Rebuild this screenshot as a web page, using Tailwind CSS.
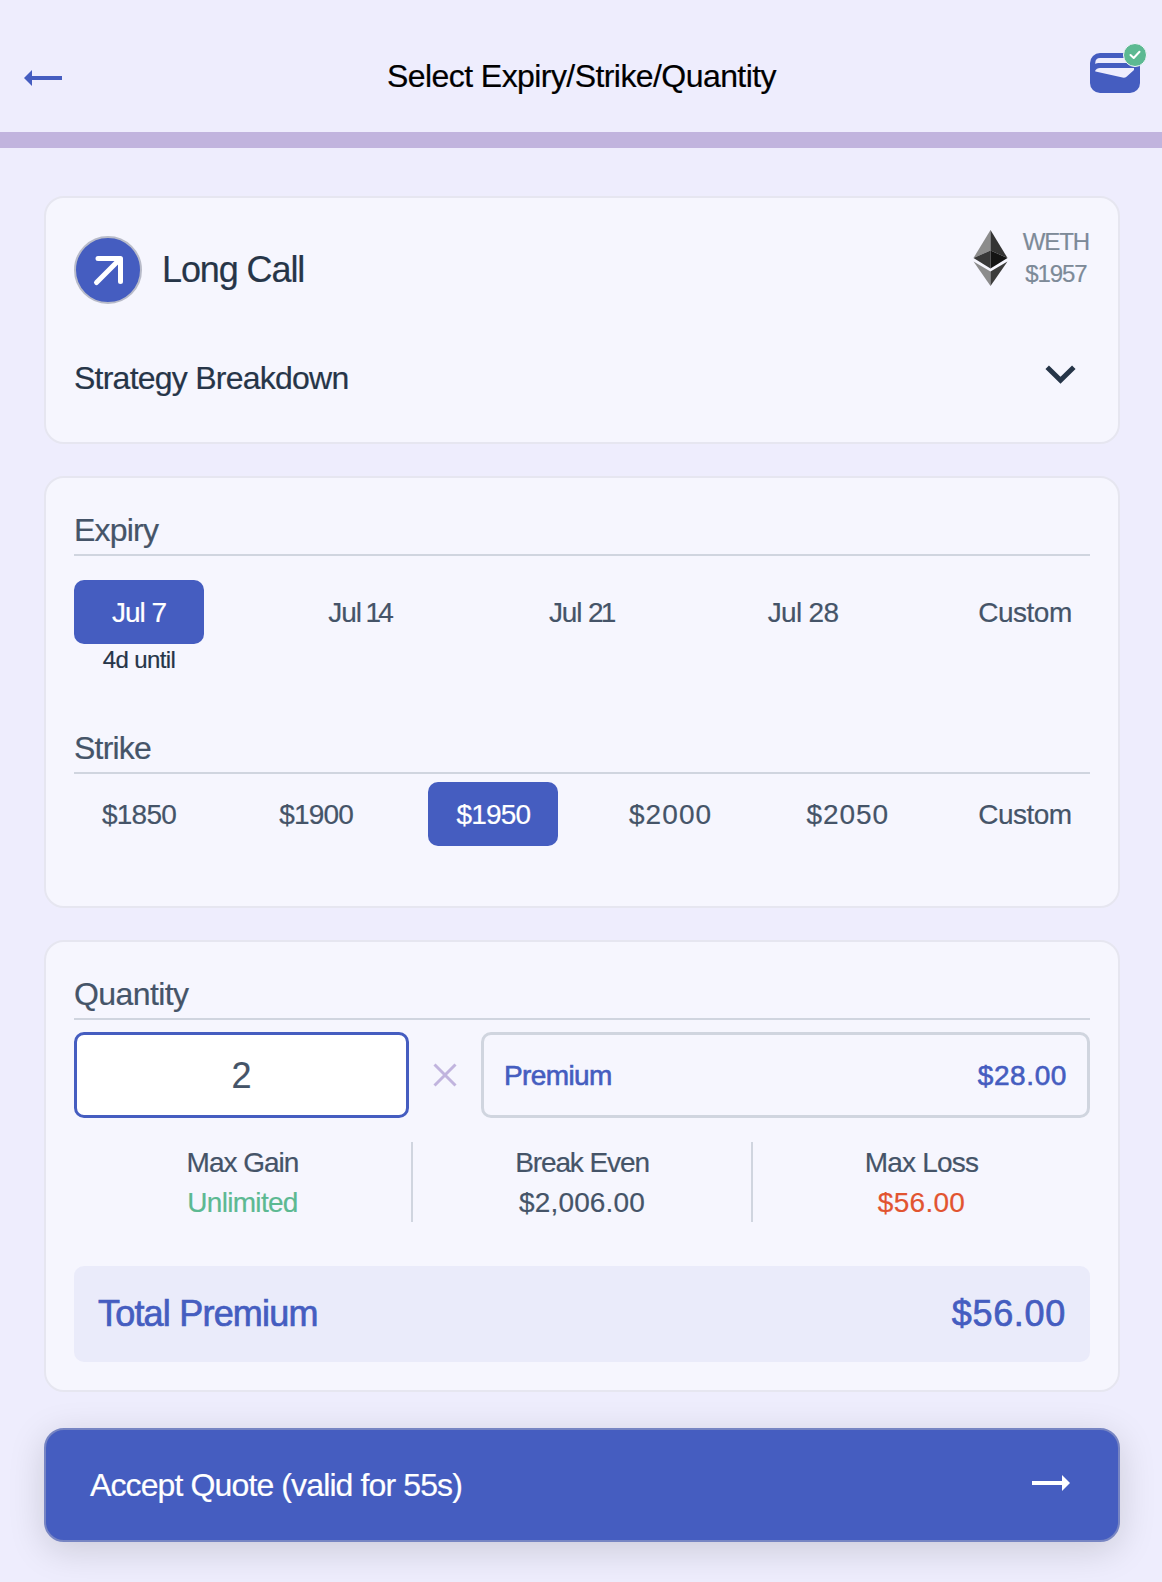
<!DOCTYPE html>
<html lang="en">
<head>
<meta charset="utf-8">
<title>Select Expiry/Strike/Quantity</title>
<script src="https://cdn.jsdelivr.net/npm/@tailwindcss/browser@4"></script>
</head>
<body class="h-[1582px] overflow-hidden bg-[#eeedfd] font-['Liberation_Sans',Arial,sans-serif] whitespace-nowrap [-webkit-text-stroke:0.2px]">
<header class="flex h-[148px] items-start justify-between border-b-16 border-[#c1b4de] pl-6 pr-[22px]">
  <svg class="mt-[70px] h-4 w-[38px] shrink-0" viewBox="0 0 38 16" fill="#455dc0"><path d="M0 8L8 0V6H38V10H8V16Z"/></svg>
  <h1 class="mt-14 ml-[11px] text-[32px] leading-[40px] tracking-[-0.57px] text-black">Select Expiry/Strike/Quantity</h1>
  <div class="relative mt-[53px] h-10 w-[50px]">
    <svg class="h-10 w-[50px]" viewBox="0 0 50 40"><rect width="50" height="40" rx="10" fill="#455dc0"/><path d="M5.300 11V9.500Q5.500 5 10 5H40V10H8.500Q6.500 10 5.300 11ZM5 18Q6.500 15 10 15H44V17L36.500 23.800Q35 25 32.500 24.600L5.500 18.500Z" fill="#eeedfd"/></svg>
    <svg class="absolute -top-[10px] left-[33px] size-6" viewBox="0 0 24 24"><circle cx="12" cy="12" r="11.500" fill="#5cb992" stroke="#f6f6fe" stroke-width="1"/><path d="M7.500 12L10.700 15L16.500 8.700" fill="none" stroke="#fff" stroke-width="2" stroke-linecap="round" stroke-linejoin="round"/></svg>
  </div>
</header>
<main class="flex flex-col pt-12 pr-[42px] pl-11">
  <section class="h-[248px] rounded-[20px] border-2 border-[#e6e6f0] bg-[#f6f6fe] px-7 text-[#263548]">
    <div class="flex justify-between">
      <div class="flex items-center pt-[38px]">
        <div class="flex size-[68px] items-center justify-center rounded-full border-2 border-[#b8bbc9] bg-[#455dc0]">
          <svg class="size-16 shrink-0" viewBox="0 0 64 64" fill="none" stroke="#fff" stroke-width="5" stroke-linecap="round" stroke-linejoin="round"><path d="M22 20.500H44.500V43.500M43.500 21.500L20.500 44.500"/></svg>
        </div>
        <h2 class="ml-5 text-[36px] leading-10 tracking-[-1.1px]">Long Call</h2>
      </div>
      <div class="flex pt-[28px] text-[24px] leading-8 text-[#7d8a98]">
        <svg class="mt-1 mr-[15px] h-14 w-[35px]" viewBox="0 0 35 56"><path d="M17.500 0L.5 28L17.500 20.500Z" fill="#8c8c8c"/><path d="M17.500 0L34.500 28L17.500 20.500Z" fill="#343434"/><path d="M.5 28L17.500 20.500V38.500Z" fill="#393939"/><path d="M34.500 28L17.500 20.500V38.500Z" fill="#141414"/><path d="M.5 31.500L17.500 41.500V56Z" fill="#8c8c8c"/><path d="M34.500 31.500L17.500 41.500V56Z" fill="#3c3c3b"/></svg>
        <div class="pr-px text-center"><div class="tracking-[-1.1px]">WETH</div><div class="tracking-[-1.1px]">$1957</div></div>
      </div>
    </div>
    <div class="mt-[54px] flex items-start justify-between pr-[14px]">
      <h3 class="text-[32px] leading-10 tracking-[-0.76px]">Strategy Breakdown</h3>
      <svg class="mt-[7px] h-[19px] w-[31px]" viewBox="0 0 31 19" fill="none" stroke="#263548" stroke-width="5"><path d="M2.200 2.200L15.500 15.200L28.800 2.200"/></svg>
    </div>
  </section>

  <section class="mt-8 h-[432px] rounded-[20px] border-2 border-[#e6e6f0] bg-[#f6f6fe] px-7 pt-[26px] text-[#455468]">
    <h3 class="h-[52px] border-b-2 border-[#d0d5df] text-[32px] leading-[52px] tracking-[-0.8px]">Expiry</h3>
    <div class="mt-6 flex h-24 justify-between text-center text-[28px] leading-[66px]">
      <div class="w-[130px]"><div class="h-16 rounded-[10px] bg-[#455dc0] tracking-[-1px] text-white">Jul 7</div><div class="text-[24px] leading-8 tracking-[-0.6px] text-[#263548]">4d until</div></div>
      <div class="w-[130px] tracking-[-1.1px]">Jul<span class="tracking-[-3px]"> 1</span>4</div>
      <div class="w-[130px] tracking-[-1.1px]">Jul <span class="tracking-[-3px]">2</span>1</div>
      <div class="w-[130px] pr-px tracking-[-0.7px]">Jul 28</div>
      <div class="w-[130px] tracking-[-0.5px]">Custom</div>
    </div>
    <h3 class="mt-[46px] h-[52px] border-b-2 border-[#d0d5df] text-[32px] leading-[52px] tracking-[-0.8px]">Strike</h3>
    <div class="mt-2 flex h-16 justify-between text-center text-[28px] leading-[66px] tracking-[-0.8px]">
      <div class="w-[130px]">$1850</div>
      <div class="w-[130px]">$1900</div>
      <div class="w-[130px] rounded-[10px] bg-[#455dc0] text-white">$1950</div>
      <div class="w-[130px] tracking-[1.1px]">$2000</div>
      <div class="w-[130px] tracking-[0.9px]">$2050</div>
      <div class="w-[130px] tracking-[-0.5px]">Custom</div>
    </div>
  </section>

  <section class="mt-8 h-[452px] rounded-[20px] border-2 border-[#e6e6f0] bg-[#f6f6fe] px-7 pt-[26px] text-[#455468]">
    <h3 class="h-[52px] border-b-2 border-[#d0d5df] text-[32px] leading-[52px] tracking-[-0.6px]">Quantity</h3>
    <div class="mt-3 flex h-[86px] items-center">
      <div class="h-full w-[335px] rounded-[10px] border-3 border-[#455dc0] bg-white text-center text-[36px] leading-[82px]">2</div>
      <svg class="mx-6 size-6" viewBox="0 0 24 24" fill="none" stroke="#c1b4de" stroke-width="3"><path d="M1.500 1.500L22.500 22.500M22.500 1.500L1.500 22.500"/></svg>
      <div class="flex h-full grow items-center justify-between rounded-[10px] border-3 border-[#d0d5df] pt-0.5 pr-5 pl-5 text-[28px] text-[#455dc0] [-webkit-text-stroke:0.6px]"><span class="tracking-[-0.6px]">Premium</span><span class="tracking-[0.6px]">$28.00</span></div>
    </div>
    <div class="mt-6 grid grid-cols-[339px_340px_1fr] text-center text-[28px] leading-10">
      <div class="h-20 border-r-2 border-[#d0d5df] pt-px"><div class="tracking-[-1px]">Max Gain</div><div class="tracking-[-0.7px] text-[#5cb992]">Unlimited</div></div>
      <div class="h-20 border-r-2 border-[#d0d5df] pt-px"><div class="tracking-[-1.1px]">Break Even</div><div class="tracking-[0.15px]">$2,006.00</div></div>
      <div class="h-20 pt-px"><div class="tracking-[-0.8px]">Max Loss</div><div class="tracking-[0.3px] text-[#e25430]">$56.00</div></div>
    </div>
    <div class="mt-11 flex h-24 items-center justify-between rounded-[10px] bg-[#eaebfa] px-6 text-[36px] text-[#455dc0] [-webkit-text-stroke:0.7px]"><span class="tracking-[-0.8px]">Total Premium</span><span class="tracking-[0.7px]">$56.00</span></div>
  </section>

  <button class="mt-9 flex h-[114px] items-center justify-between rounded-[20px] border-2 border-[#7785c3] bg-[#455dc0] pr-12 pl-11 text-[32px] tracking-[-0.88px] text-white shadow-[0_8px_36px_rgba(0,0,0,0.15)]">
    <span>Accept Quote (valid for 55s)</span>
    <svg class="-mt-1 h-4 w-[38px]" viewBox="0 0 38 16" fill="#fff"><path d="M38 8L30 0V6H0V10H30V16Z"/></svg>
  </button>
</main>
</body>
</html>
